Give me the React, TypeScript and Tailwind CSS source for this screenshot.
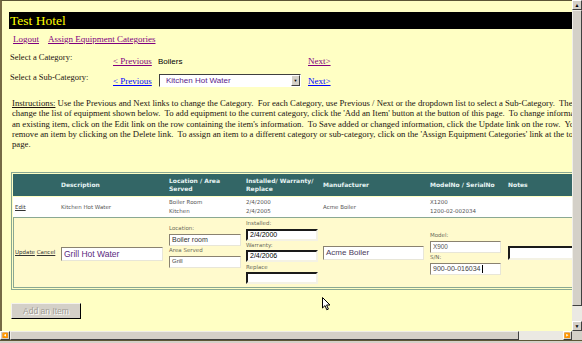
import React from 'react';

const serif = "font-['Liberation_Serif',serif]";
const sans = "font-['Liberation_Sans',Arial,sans-serif]";
const verdana = "font-['DejaVu_Sans',Verdana,sans-serif]";

const cols = 'grid grid-cols-[46px_108px_77px_77px_107px_78px_140px]';

const lines = [
  "Use the Previous and Next links to change the Category.  For each Category, use Previous / Next or the dropdown list to select a Sub-Category.  The Sub-Category will",
  "change the list of equipment shown below.  To add equipment to the current category, click the 'Add an Item' button at the button of this page.  To change information on",
  "an existing item, click on the Edit link on the row containing the item's information.  To Save added or changed information, click the Update link on the row.  You can",
  "remove an item by clicking on the Delete link.  To assign an item to a different category or sub-category, click on the 'Assign Equipment Categories' link at the top of this",
  'page.',
];

interface FieldProps {
  className: string;
  text?: string;
  textClass?: string;
  caret?: boolean;
}

const Field = ({ className, text, textClass, caret }: FieldProps) => (
  <div className={`flex items-center overflow-hidden bg-white pl-[2px] ${sans} ${className}`}>
    <span className={`whitespace-nowrap ${textClass}`}>{text}</span>
    {caret && <span className="ml-px h-[8px] w-px bg-black" />}
  </div>
);

const Label = ({ children, className = '' }: { children: React.ReactNode; className?: string }) => (
  <div className={`text-[5.5px] leading-[7px] text-[#6a6a5a] ${verdana} ${className}`}>{children}</div>
);

const inset = 'border border-t-[#8a8270] border-l-[#8a8270] border-b-[#e8e6d8] border-r-[#e8e6d8]';
const insetDark = 'border-2 border-t-[#1a1a1a] border-l-[#1a1a1a] border-b-[#f4f2e4] border-r-[#f4f2e4]';

const VScroll = () => (
  <div className="flex w-[10px] flex-col bg-[#d4d0c8]">
    <div className="flex h-[10px] items-center justify-center border border-t-white border-l-white border-b-[#404040] border-r-[#404040] text-[5px] leading-none text-black">
      ▲
    </div>
    <div className="flex-1 border border-t-[#f0eee8] border-l-[#f0eee8] border-b-[#404040] border-r-[#404040]" />
    <div className="h-[15px] bg-[#ebe9e3]" />
    <div className="flex h-[10px] items-center justify-center border border-t-white border-l-white border-b-[#404040] border-r-[#404040] text-[5px] leading-none text-black">
      ▼
    </div>
  </div>
);

const HScroll = () => (
  <div className="flex h-[9px] bg-[#d4d0c8]">
    <div className="flex w-[10px] items-center justify-center border border-t-white border-l-white border-b-[#404040] border-r-[#404040] text-[5px] leading-none text-black">
      ◀
    </div>
    <div className="w-[509px] border border-t-[#f0eee8] border-l-[#f0eee8] border-b-[#404040] border-r-[#404040]" />
    <div className="w-[44px] bg-[#ebe9e3]" />
    <div className="flex w-[9px] items-center justify-center border border-t-white border-l-white border-b-[#404040] border-r-[#404040] text-[5px] leading-none text-black">
      ▶
    </div>
    <div className="flex-1 bg-[#d4d0c8]" />
  </div>
);

const Cursor = () => (
  <svg className="absolute left-[322px] top-[297px]" width="9" height="14" viewBox="0 0 9 14">
    <path d="M0.5 0.5 L0.5 11 L3 8.6 L4.8 12.8 L6.4 12.1 L4.6 8 L8 8 Z" fill="#fff" stroke="#000" strokeWidth="1" strokeLinejoin="miter" />
  </svg>
);

export default function App() {
  return (
    <div className="relative flex h-[343px] w-[582px] flex-col overflow-hidden bg-[#d4d0c8]">
      <div className="flex h-[331px]">
        <div className="min-w-0 flex-1 overflow-hidden border-l-2 border-t border-l-[#766a44] border-t-[#5c5636] bg-[#ffffc4]">
          <div className="w-[640px] pl-[7px] pt-[11px]">
            <div className={`h-[17px] w-[563px] bg-black pl-px text-[13.5px] leading-[17px] text-[#ffff00] ${serif}`}>
              Test Hotel
            </div>

            <div className={`mt-[4px] flex h-[12px] gap-[9px] pl-[4px] text-[9px] leading-[12px] text-[#800080] ${serif}`}>
              <a className="underline">Logout</a>
              <a className="underline">Assign Equipment Categories</a>
            </div>

            <div className={`mt-[7px] flex pl-px ${serif}`}>
              <div className="w-[103px] text-[8.5px] leading-[11px] text-[#1e1410]">Select a Category:</div>
              <div className="w-[45px] pt-[3.5px] text-[9px] leading-[11px] text-[#800080] underline">&lt; Previous</div>
              <div className={`w-[150px] pt-[3.5px] text-[8px] leading-[11px] text-black ${sans}`}>Boilers</div>
              <div className="pt-[3.5px] text-[9px] leading-[11px] text-[#800080] underline">Next&gt;</div>
            </div>

            <div className={`mt-[5.5px] flex pl-px ${serif}`}>
              <div className="w-[103px] text-[8.5px] leading-[11px] text-[#1e1410]">Select a Sub-Category:</div>
              <div className="w-[45px] pt-[4px] text-[9px] leading-[11px] text-[#0000ff] underline">&lt; Previous</div>
              <div className="w-[150px] pl-px pt-[2px]">
                <div className="flex h-[13px] w-[142px] border border-t-[#404040] border-l-[#404040] border-b-white border-r-white bg-white">
                  <div className={`flex-1 pl-[6px] text-[8px] leading-[11px] text-[#5a1a8a] ${sans}`}>Kitchen Hot Water</div>
                  <div className="flex w-[9px] items-center justify-center border border-t-white border-l-white border-b-[#404040] border-r-[#404040] bg-[#d4d0c8] text-[4px] leading-none text-black">
                    ▼
                  </div>
                </div>
              </div>
              <div className="pt-[4px] text-[9px] leading-[11px] text-[#0000ff] underline">Next&gt;</div>
            </div>

            <div className={`mt-[11px] pl-[3px] text-[8.7px] leading-[10.3px] text-[#221410] ${serif}`}>
              {lines.map((l, i) => (
                <div key={i} className="whitespace-pre">
                  {i === 0 && <span className="underline">Instructions:</span>}
                  {i === 0 ? ' ' + l : l}
                </div>
              ))}
            </div>

            <div className="ml-[2px] mt-[22.5px] w-[620px] border border-[#8aa893] p-px">
              <div className={`${cols} h-[22px] items-center bg-[#336666] text-[6px] font-bold leading-[7.5px] text-[#e6f4f4] ${verdana}`}>
                <div />
                <div className="pl-[2px]">Description</div>
                <div className="pl-[2px]">Location / Area<br />Served</div>
                <div className="pl-[2px]">Installed/ Warranty/<br />Replace</div>
                <div className="pl-[2px]">Manufacturer</div>
                <div className="pl-[2px]">ModelNo / SerialNo</div>
                <div className="pl-[2px]">Notes</div>
              </div>

              <div className={`${cols} mt-px h-[20px] items-center bg-white text-[5.5px] leading-[8.5px] text-[#555] ${verdana}`}>
                <div className="pl-[2px] text-[#333] underline">Edit</div>
                <div className="pl-[2px]">Kitchen Hot Water</div>
                <div className="pl-[2px]">Boiler Room<br />Kitchen</div>
                <div className="pl-[2px]">2/4/2000<br />2/4/2005</div>
                <div className="pl-[2px]">Acme Boiler</div>
                <div className="pl-[2px]">X1200<br />1200-02-002034</div>
                <div />
              </div>

              <div className={`${cols} h-[71px] items-start bg-[#fffacd] shadow-[inset_0_0_0_1px_#8aa893]`}>
                <div className={`pl-[2px] pt-[32.5px] text-[5.5px] leading-[7px] text-[#333] ${verdana}`}>
                  <span className="underline">Update</span> <span className="underline">Cancel</span>
                </div>
                <div className="pl-[2px] pt-[30px]">
                  <Field className={`h-[14px] w-[102px] ${inset}`} text="Grill Hot Water" textClass="text-[8.5px] text-[#5a2a80]" />
                </div>
                <div className="pl-[2px] pt-[8.5px]">
                  <Label>Location:</Label>
                  <Field className={`mt-[1.5px] h-[12px] w-[72px] ${inset}`} text="Boiler room" textClass="text-[7px] text-[#333]" />
                  <Label className="mt-[1.5px]">Area Served</Label>
                  <Field className={`mt-[1.5px] h-[12px] w-[72px] ${inset}`} text="Grill" textClass="text-[6px] text-[#444]" />
                </div>
                <div className="pl-[2px] pt-[3.5px]">
                  <Label>Installed:</Label>
                  <Field className={`mt-[2px] h-[12px] w-[72px] ${insetDark}`} text="2/4/2000" textClass="text-[7px] text-black" />
                  <Label className="mt-px">Warranty:</Label>
                  <Field className={`mt-px h-[12px] w-[72px] ${insetDark}`} text="2/4/2006" textClass="text-[7px] text-black" />
                  <Label className="mt-[2px]">Replace</Label>
                  <Field className={`mt-px h-[12px] w-[72px] ${insetDark}`} />
                </div>
                <div className="pl-[2px] pt-[29px]">
                  <Field className={`h-[14px] w-[101px] ${inset}`} text="Acme Boiler" textClass="text-[8px] text-[#4a3a5a]" />
                </div>
                <div className="pl-[2px] pt-[15.5px]">
                  <Label>Model:</Label>
                  <Field className={`mt-[1.5px] h-[12px] w-[71px] ${inset}`} text="X900" textClass="text-[6.4px] text-[#555]" />
                  <Label className="mt-[1.5px]">S/N:</Label>
                  <Field className={`mt-[1.5px] h-[12px] w-[71px] ${inset}`} text="900-00-016034" textClass="text-[7px] text-[#444]" caret />
                </div>
                <div className="pl-[2px] pt-[29px]">
                  <Field className={`h-[14px] w-[100px] ${insetDark}`} />
                </div>
              </div>
            </div>

            <button
              className={`ml-[2px] mt-[13px] flex h-[16px] w-[70px] items-center justify-center border border-t-[#f4f2ec] border-l-[#f4f2ec] border-b-black border-r-black bg-[#d4d0c8] text-[8.5px] text-[#a09c94] [text-shadow:1px_1px_0_#ffffff] ${sans}`}
            >
              Add an Item
            </button>
          </div>
        </div>
        <VScroll />
      </div>
      <HScroll />
      <div className="h-[3px] border-t border-t-[#5c5636] bg-[#d4d0c8]" />
      <Cursor />
    </div>
  );
}
